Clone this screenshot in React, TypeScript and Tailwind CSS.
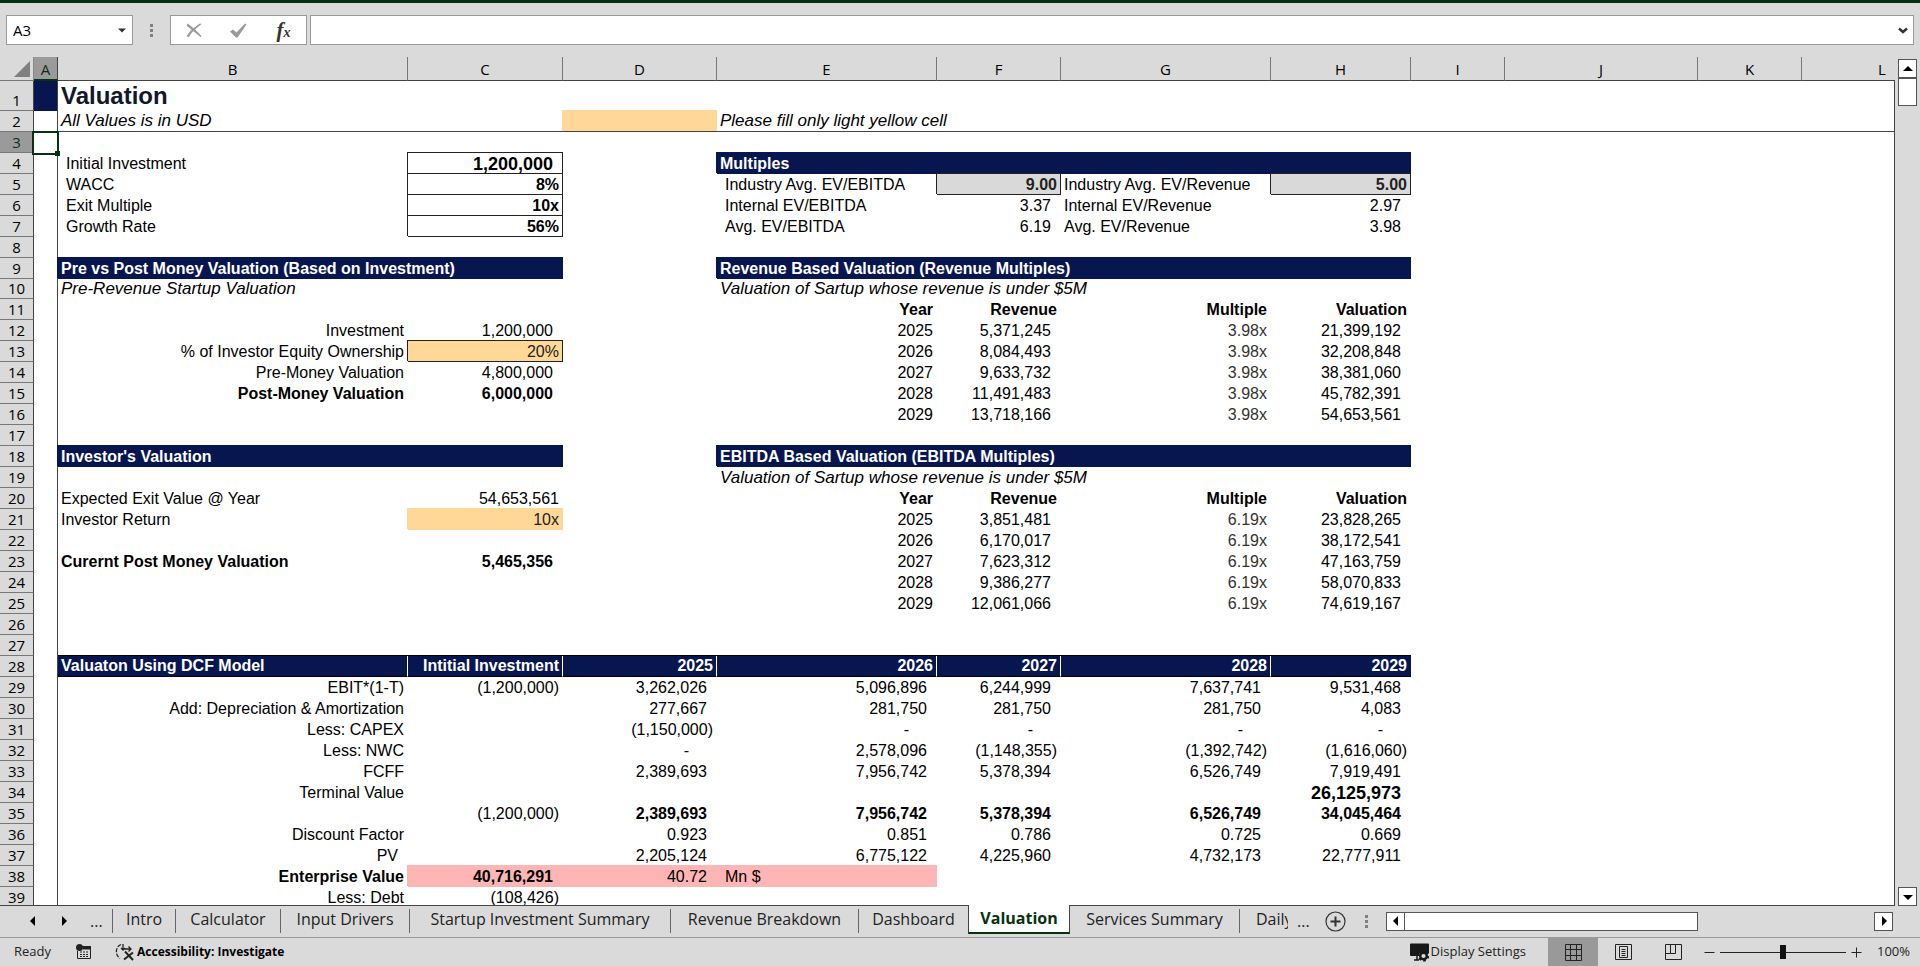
import { useState } from 'react';
import type { ReactNode } from 'react';

type Cell = { v?: ReactNode; cls?: string; span?: number };

const COLUMNS = [
  { id: 'A', w: 'w-[24px]' },
  { id: 'B', w: 'w-[350px]' },
  { id: 'C', w: 'w-[155px]' },
  { id: 'D', w: 'w-[154px]' },
  { id: 'E', w: 'w-[220px]' },
  { id: 'F', w: 'w-[124px]' },
  { id: 'G', w: 'w-[210px]' },
  { id: 'H', w: 'w-[140px]' },
  { id: 'I', w: 'w-[94px]' },
  { id: 'J', w: 'w-[193px]' },
  { id: 'K', w: 'w-[104px]' },
  { id: 'L', w: 'w-[161px]' },
];

// alignment presets
const L = 'pl-[3px]';
const LI = 'pl-2';
const R = 'text-right pr-1';
const ACC = 'text-right pr-[10px]';
const DASH = 'text-right pr-7';
const NOTE = 'pl-[3px] text-[17px] italic';

// fills and boxes
const BOX = 'shadow-[-1px_-1px_0_0_#222,0_-1px_0_0_#222,inset_-1px_-1px_0_0_#222]';
const NAVY = 'bg-[#08164f] text-white font-bold shadow-[-1px_-1px_0_0_#08164f,0_-1px_0_0_#08164f]';
const YELLOW = 'bg-[#ffd898]';
const YELLOW_EDGE = 'shadow-[-1px_-1px_0_0_#ffd898,0_-1px_0_0_#ffd898]';
const PINK = 'bg-[#feb5b5] shadow-[-1px_-1px_0_0_#feb5b5,0_-1px_0_0_#feb5b5]';
const DCF = 'bg-[#08164f] text-white font-bold border-b border-b-black shadow-[0_-1px_0_0_#000]';
const DCF_R = DCF + ' border-r border-r-white text-right pr-[3px]';

const cells: Record<string, Cell> = {
  A1: { cls: 'bg-[#08164f]' },
  B1: { v: 'Valuation', cls: 'pl-[3px] pb-[1px] text-2xl leading-7 font-bold text-[#111827]' },
  B2: { v: 'All Values is in USD', cls: NOTE },
  D2: { cls: YELLOW + ' ' + YELLOW_EDGE },
  E2: { v: 'Please fill only light yellow cell', cls: NOTE },

  B4: { v: 'Initial Investment', cls: LI },
  B5: { v: 'WACC', cls: LI },
  B6: { v: 'Exit Multiple', cls: LI },
  B7: { v: 'Growth Rate', cls: LI },
  C4: { v: '1,200,000', cls: ACC + ' font-bold text-lg leading-5 ' + BOX },
  C5: { v: '8%', cls: R + ' font-bold ' + BOX },
  C6: { v: '10x', cls: R + ' font-bold ' + BOX },
  C7: { v: '56%', cls: R + ' font-bold ' + BOX },

  E4: { v: 'Multiples', cls: L + ' ' + NAVY, span: 4 },
  E5: { v: 'Industry Avg. EV/EBITDA', cls: LI },
  F5: { v: '9.00', cls: R + ' font-bold bg-[#d9d9d9] text-[#222] ' + BOX },
  G5: { v: 'Industry Avg. EV/Revenue', cls: L },
  H5: { v: '5.00', cls: R + ' font-bold bg-[#d9d9d9] text-[#222] ' + BOX },
  E6: { v: 'Internal EV/EBITDA', cls: LI },
  F6: { v: '3.37', cls: ACC },
  G6: { v: 'Internal EV/Revenue', cls: L },
  H6: { v: '2.97', cls: ACC },
  E7: { v: 'Avg. EV/EBITDA', cls: LI },
  F7: { v: '6.19', cls: ACC },
  G7: { v: 'Avg. EV/Revenue', cls: L },
  H7: { v: '3.98', cls: ACC },

  B9: { v: 'Pre vs Post Money Valuation (Based on Investment)', cls: L + ' ' + NAVY, span: 2 },
  B10: { v: 'Pre-Revenue Startup Valuation', cls: NOTE },
  B12: { v: 'Investment', cls: R },
  C12: { v: '1,200,000', cls: ACC },
  B13: { v: '% of Investor Equity Ownership', cls: R },
  C13: { v: '20%', cls: R + ' text-[#222] ' + YELLOW + ' ' + BOX },
  B14: { v: 'Pre-Money Valuation', cls: R },
  C14: { v: '4,800,000', cls: ACC },
  B15: { v: 'Post-Money Valuation', cls: R + ' font-bold' },
  C15: { v: '6,000,000', cls: ACC + ' font-bold' },

  B18: { v: "Investor's Valuation", cls: L + ' ' + NAVY, span: 2 },
  B20: { v: 'Expected Exit Value @ Year', cls: L },
  C20: { v: '54,653,561', cls: R },
  B21: { v: 'Investor Return', cls: L },
  C21: { v: '10x', cls: R + ' text-[#222] ' + YELLOW + ' ' + YELLOW_EDGE },
  B23: { v: 'Curernt Post Money Valuation', cls: L + ' font-bold' },
  C23: { v: '5,465,356', cls: ACC + ' font-bold' },

  B28: { v: 'Valuaton Using DCF Model', cls: DCF + ' pl-[3px] border-r border-r-white' },
  C28: { v: 'Intitial Investment', cls: DCF_R },
  D28: { v: '2025', cls: DCF_R },
  E28: { v: '2026', cls: DCF_R },
  F28: { v: '2027', cls: DCF_R },
  G28: { v: '2028', cls: DCF_R },
  H28: { v: '2029', cls: DCF + ' text-right pr-1' },

  B38: { v: 'Enterprise Value', cls: R + ' font-bold' },
  C38: { v: '40,716,291', cls: ACC + ' font-bold ' + PINK },
  D38: { v: '40.72', cls: ACC + ' ' + PINK },
  E38: { v: 'Mn $', cls: LI + ' ' + PINK },
  B39: { v: 'Less: Debt', cls: R },
  C39: { v: '(108,426)', cls: R },
};

function addMultiples(top: number, title: string, rows: string[][]) {
  cells['E' + top] = { v: title, cls: L + ' ' + NAVY, span: 4 };
  cells['E' + (top + 1)] = { v: 'Valuation of Sartup whose revenue is under $5M', cls: NOTE };
  ['Year', 'Revenue', 'Multiple', 'Valuation'].forEach((h, i) => {
    cells['EFGH'[i] + (top + 2)] = { v: h, cls: R + ' font-bold' };
  });
  rows.forEach(([year, revenue, multiple, valuation], i) => {
    const n = top + 3 + i;
    cells['E' + n] = { v: year, cls: R };
    cells['F' + n] = { v: revenue, cls: ACC };
    cells['G' + n] = { v: multiple, cls: R + ' text-[#333]' };
    cells['H' + n] = { v: valuation, cls: ACC };
  });
}

addMultiples(9, 'Revenue Based Valuation (Revenue Multiples)', [
  ['2025', '5,371,245', '3.98x', '21,399,192'],
  ['2026', '8,084,493', '3.98x', '32,208,848'],
  ['2027', '9,633,732', '3.98x', '38,381,060'],
  ['2028', '11,491,483', '3.98x', '45,782,391'],
  ['2029', '13,718,166', '3.98x', '54,653,561'],
]);

addMultiples(18, 'EBITDA Based Valuation (EBITDA Multiples)', [
  ['2025', '3,851,481', '6.19x', '23,828,265'],
  ['2026', '6,170,017', '6.19x', '38,172,541'],
  ['2027', '7,623,312', '6.19x', '47,163,759'],
  ['2028', '9,386,277', '6.19x', '58,070,833'],
  ['2029', '12,061,066', '6.19x', '74,619,167'],
]);

const dcfRows: [number, string[]][] = [
  [29, ['EBIT*(1-T)', '(1,200,000)', '3,262,026', '5,096,896', '6,244,999', '7,637,741', '9,531,468']],
  [30, ['Add: Depreciation & Amortization', '', '277,667', '281,750', '281,750', '281,750', '4,083']],
  [31, ['Less: CAPEX', '', '(1,150,000)', '-', '-', '-', '-']],
  [32, ['Less: NWC', '', '-', '2,578,096', '(1,148,355)', '(1,392,742)', '(1,616,060)']],
  [33, ['FCFF', '', '2,389,693', '7,956,742', '5,378,394', '6,526,749', '7,919,491']],
  [34, ['Terminal Value', '', '', '', '', '', '26,125,973']],
  [35, ['', '(1,200,000)', '2,389,693', '7,956,742', '5,378,394', '6,526,749', '34,045,464']],
  [36, ['Discount Factor', '', '0.923', '0.851', '0.786', '0.725', '0.669']],
  [37, ['PV', '', '2,205,124', '6,775,122', '4,225,960', '4,732,173', '22,777,911']],
];

dcfRows.forEach(([n, values]) => {
  values.forEach((v, i) => {
    if (!v) return;
    let cls = ACC;
    if (v === '-') cls = DASH;
    else if (v.startsWith('(') || (i === 0 && v !== 'PV')) cls = R;
    if (n === 35 && i > 1) cls += ' font-bold';
    if (n === 34 && i > 1) cls += ' font-bold text-lg leading-5';
    cells['BCDEFGH'[i] + n] = { v, cls };
  });
});

const ROWS = Array.from({ length: 39 }, (_, i) => i + 1);

function rowHeight(n: number) {
  if (n === 1) return 'h-[30px]';
  if (n === 10) return 'h-[20px]';
  return 'h-[21px]';
}

function SheetRow({ n }: { n: number }) {
  const tds: ReactNode[] = [];
  for (let i = 0; i < COLUMNS.length; i++) {
    const id = COLUMNS[i].id;
    const cell = cells[id + n];
    const freeze =
      (n === 2 ? ' border-b border-b-[#444]' : '') +
      (id === 'A' ? ' border-r border-r-[#444]' : '');
    tds.push(
      <td
        key={id}
        colSpan={cell?.span}
        className={'p-0 align-bottom whitespace-nowrap ' + (cell?.cls ?? '') + freeze}
      >
        {n === 3 && id === 'A' ? (
          <div className="relative h-5">
            <div className="absolute -top-[2px] -left-[2px] h-6 w-[27px] border-2 border-[#06320f]" />
            <div className="absolute top-[18px] left-[21px] size-[5px] bg-[#06320f]" />
          </div>
        ) : (
          cell?.v
        )}
      </td>,
    );
    if (cell?.span) i += cell.span - 1;
  }
  return (
    <tr className={rowHeight(n)}>
      <th
        scope="row"
        className={
          'border-r border-b border-r-[#444] border-b-[#777] p-0 text-center align-bottom font-["Open_Sans",sans-serif] text-[15px] leading-[19px] font-normal ' +
          (n === 3 ? 'bg-[#9a9a9a] text-[#0b3016]' : 'bg-[#dadada]')
        }
      >
        {n}
      </th>
      {tds}
    </tr>
  );
}

function Sheet() {
  return (
    <table className='w-[1963px] table-fixed border-separate border-spacing-0 bg-white font-["Liberation_Sans",Arial,sans-serif] text-base leading-5 text-black'>
      <colgroup>
        <col className="w-[34px]" />
        {COLUMNS.map(c => (
          <col key={c.id} className={c.w} />
        ))}
      </colgroup>
      <thead>
        <tr className='h-6 bg-[#dadada] font-["Open_Sans",sans-serif] text-[15px]'>
          <td className="border-r border-b border-r-[#888] border-b-[#777] p-0 align-bottom">
            <svg className="mb-[3px] ml-[14px]" width="16" height="16" viewBox="0 0 16 16" aria-hidden="true">
              <path d="M16 0V16H0Z" fill="#808080" />
            </svg>
          </td>
          {COLUMNS.map(c => (
            <th
              key={c.id}
              scope="col"
              className={
                'border-r p-0 text-center align-bottom font-normal ' +
                (c.id === 'A'
                  ? 'border-r-[#444] border-b-2 border-b-[#06320f] bg-[#9a9a9a] text-[#0b3016]'
                  : 'border-r-[#777] border-b border-b-[#444] pb-[1px]')
              }
            >
              {c.id}
            </th>
          ))}
        </tr>
      </thead>
      <tbody>
        {ROWS.map(n => (
          <SheetRow key={n} n={n} />
        ))}
      </tbody>
    </table>
  );
}

function Dots() {
  return (
    <span className="flex flex-col gap-[2px]">
      <span className="size-[3px] bg-[#808080]" />
      <span className="size-[3px] bg-[#808080]" />
      <span className="size-[3px] bg-[#808080]" />
    </span>
  );
}

function FormulaBar() {
  return (
    <div className="flex h-[54px] shrink-0 items-start pt-3 pr-[6px] pl-[6px]">
      <div className="flex h-[30px] w-[127px] items-center border border-[#999] bg-white">
        <input
          aria-label="Name Box"
          defaultValue="A3"
          className='min-w-0 flex-1 bg-transparent pl-[6px] font-["Open_Sans",sans-serif] text-[15px] outline-none'
        />
        <button type="button" aria-label="Open name list" className="px-[6px]">
          <svg width="8" height="5" viewBox="0 0 8 5" aria-hidden="true">
            <path d="M0 0.500H8L4 4.500Z" fill="#333" />
          </svg>
        </button>
      </div>
      <div className="flex h-[30px] w-[37px] items-center justify-center">
        <Dots />
      </div>
      <div className="flex h-[30px] w-[137px] items-center border border-[#999] bg-white">
        <button type="button" aria-label="Cancel" className="flex flex-1 justify-center">
          <svg width="16" height="15" viewBox="0 0 16 15" fill="#999" aria-hidden="true">
            <path d="M1.500 0.500C5 3 11 8 15.500 13L14.500 14C10 10 4 5.500 0.500 2.500Z" />
            <path d="M14 0.500L15.500 1C11 4.500 5 9.500 3 14L0.500 13.500C3 8.500 9 4 14 0.500Z" />
          </svg>
        </button>
        <button type="button" aria-label="Enter" className="flex flex-1 justify-center">
          <svg width="17" height="15" viewBox="0 0 17 15" fill="none" aria-hidden="true">
            <path d="M0 8.500L3 6.500L6.500 9.500L15 0.500L16.500 1.500L7.500 14.500H6Z" fill="#999" />
          </svg>
        </button>
        <button
          type="button"
          aria-label="Insert Function"
          className='flex-1 font-["Liberation_Serif",serif] text-[21px] leading-6 font-bold text-[#333] italic'
        >
          f<span className="text-sm">x</span>
        </button>
      </div>
      <div className="ml-[3px] flex h-[30px] flex-1 items-center border border-[#999] bg-white">
        <input aria-label="Formula Bar" className="h-full min-w-0 flex-1 px-2 text-sm outline-none" />
        <button type="button" aria-label="Expand Formula Bar" className="px-[5px]">
          <svg width="10" height="7" viewBox="0 0 10 7" aria-hidden="true">
            <path d="M1 1.500L5 5L9 1.500" fill="none" stroke="#333" strokeWidth="2.500" />
          </svg>
        </button>
      </div>
    </div>
  );
}

function Arrow({ d }: { d: string }) {
  return (
    <svg width="10" height="10" viewBox="0 0 10 10" aria-hidden="true">
      <path d={d} fill="#000" />
    </svg>
  );
}

const SCROLL_BUTTON = 'flex size-[19px] shrink-0 items-center justify-center border border-[#555] bg-white';

const TABS = [
  { name: 'Intro', w: 'w-[63px]' },
  { name: 'Calculator', w: 'w-[105px]' },
  { name: 'Input Drivers', w: 'w-[129px]' },
  { name: 'Startup Investment Summary', w: 'w-[261px]' },
  { name: 'Revenue Breakdown', w: 'w-[188px]' },
  { name: 'Dashboard', w: 'w-[109px]' },
  { name: 'Valuation', w: 'w-[102px]' },
  { name: 'Services Summary', w: 'w-[170px]' },
];

function SheetTabs() {
  const [active, setActive] = useState('Valuation');
  return (
    <div className='flex h-8 shrink-0 items-start border-b border-[#999] font-["Open_Sans",sans-serif] text-base text-[#222]'>
      <div className="flex h-[30px] w-28 shrink-0 items-center">
        <button type="button" aria-label="Previous sheet" className="ml-7">
          <Arrow d="M7 0V10L2 5Z" />
        </button>
        <button type="button" aria-label="Next sheet" className="ml-[22px]">
          <Arrow d="M2 0V10L7 5Z" />
        </button>
        <button type="button" aria-label="More sheets" className="ml-5 leading-6">...</button>
      </div>
      <div className="mt-[3px] h-6 w-px shrink-0 bg-[#666]" />
      {TABS.map(({ name, w }, i) =>
        name === active ? (
          <button
            key={name}
            type="button"
            className={
              'relative z-10 -mt-px h-[29px] shrink-0 border-x border-b-2 border-x-[#444] border-b-[#06320f] bg-white pb-[1px] font-bold whitespace-nowrap text-[#06320f] ' + w
            }
          >
            {name}
          </button>
        ) : (
          <button
            key={name}
            type="button"
            onClick={() => setActive(name)}
            className={
              'mt-[3px] h-6 shrink-0 pb-1 leading-5 whitespace-nowrap ' +
              w +
              (TABS[i + 1]?.name === active ? '' : ' border-r border-r-[#666]')
            }
          >
            {name}
          </button>
        ),
      )}
      <button type="button" className="mt-[3px] h-6 w-[48px] shrink-0 overflow-hidden pb-1 pl-4 text-left leading-5">
        Daily
      </button>
      <div className="flex h-[30px] flex-1 items-center">
        <button type="button" aria-label="Scroll tabs right" className="ml-[9px] leading-6">...</button>
        <button type="button" aria-label="New sheet" className="ml-[15px]">
          <svg width="21" height="21" viewBox="0 0 21 21" fill="none" stroke="#333" aria-hidden="true">
            <circle cx="10.500" cy="10.500" r="9.500" strokeWidth="1.200" />
            <path d="M10.500 5.500V15.500M5.500 10.500H15.500" strokeWidth="2" />
          </svg>
        </button>
        <div className="ml-[19px]">
          <Dots />
        </div>
        <div className="ml-auto flex w-[507px] items-center">
          <button type="button" aria-label="Scroll left" className={SCROLL_BUTTON}>
            <Arrow d="M7 0V10L2 5Z" />
          </button>
          <div className="-ml-px h-[19px] w-[294px] border border-[#555] bg-white" />
          <button type="button" aria-label="Scroll right" className={'ml-auto ' + SCROLL_BUTTON}>
            <Arrow d="M3 0V10L8 5Z" />
          </button>
        </div>
        <div className="w-[27px]" />
      </div>
    </div>
  );
}

const VIEW_BUTTON = 'flex h-full w-[50px] items-center justify-center';

function StatusBar() {
  return (
    <div className='flex h-7 shrink-0 items-center pl-[14px] font-["Open_Sans",sans-serif] text-[13px] text-[#222]'>
      <span>Ready</span>
      <button type="button" aria-label="Record macro" className="ml-[25px]">
        <svg width="16" height="16" viewBox="0 0 16 16" aria-hidden="true">
          <path d="M5.500 2.500H14.500V14.500H1.500V7" fill="none" stroke="#222" />
          <path d="M7 2H15V5.500H7Z" fill="#222" />
          <circle cx="3.500" cy="3.500" r="3.500" fill="#222" />
          <path d="M4 8H12.500M4 10.500H12.500M4 12.500H12.500" stroke="#222" strokeDasharray="2 1" />
        </svg>
      </button>
      <button type="button" className="ml-[23px] flex items-center gap-[3px] text-xs font-bold text-black">
        <svg width="19" height="18" viewBox="0 0 19 18" fill="none" stroke="#222" aria-hidden="true">
          <path d="M6 1.500C0 4 0 12 5 15.500" strokeWidth="1.300" strokeDasharray="4 1.500" />
          <path d="M8 1V7M6 5L8 7L10 5M9 6H16M13.500 3.500L16 6L13.500 8.500" strokeWidth="1.300" />
          <path d="M10 8.500L18 17M18 9.500L9 16.500" strokeWidth="2" />
        </svg>
        Accessibility: Investigate
      </button>
      <div className="ml-auto flex h-full items-center">
        <button type="button" className="mr-[22px] flex items-center gap-[2px]">
          <svg width="19" height="19" viewBox="0 0 19 19" aria-hidden="true">
            <path d="M1 0.500H18Q19 0.500 19 1.500V10H9V13H1Q0 13 0 12V1.500Q0 0.500 1 0.500Z" fill="#181818" />
            <path d="M4 17H9M7 13V17" stroke="#181818" strokeWidth="1.500" />
            <circle cx="13.500" cy="13" r="4.800" fill="none" stroke="#181818" strokeWidth="1.800" strokeDasharray="2.500 2.500" />
            <circle cx="13.500" cy="13" r="3.300" fill="#dadada" stroke="#181818" strokeWidth="2.400" />
          </svg>
          Display Settings
        </button>
        <button type="button" aria-label="Normal view" className={VIEW_BUTTON + ' bg-[#999]'}>
          <svg width="17" height="17" viewBox="0 0 17 17" fill="none" stroke="#222" aria-hidden="true">
            <path d="M0.500 0.500H16.500V16.500H0.500ZM5.500 0.500V16.500M11.500 0.500V16.500M0.500 5.500H16.500M0.500 11.500H16.500" />
          </svg>
        </button>
        <button type="button" aria-label="Page layout" className={VIEW_BUTTON}>
          <svg width="17" height="16" viewBox="0 0 17 16" fill="none" stroke="#222" aria-hidden="true">
            <path d="M0.500 0.500H16.500V15.500H0.500ZM4.500 2.500H12.500V13.500H4.500ZM6.500 5.500H10.500M6.500 7.500H10.500M6.500 9.500H10.500M6.500 11.500H10.500" />
          </svg>
        </button>
        <button type="button" aria-label="Page break preview" className={VIEW_BUTTON}>
          <svg width="17" height="16" viewBox="0 0 17 16" fill="none" stroke="#222" aria-hidden="true">
            <path d="M0.500 0.500H16.500V15.500H0.500ZM5.500 0.500V9.500M0.500 9.500H10.500V0.500" />
          </svg>
        </button>
        <button type="button" aria-label="Zoom out" className="ml-[6px]">
          <svg width="11" height="11" viewBox="0 0 11 11" stroke="#222" aria-hidden="true">
            <path d="M0.500 5.500H10.500" />
          </svg>
        </button>
        <input
          type="range"
          min={10}
          max={190}
          defaultValue={100}
          aria-label="Zoom"
          className="mx-[5px] h-4 w-[126px] appearance-none bg-[linear-gradient(#222,#222)] bg-[length:100%_1px] bg-center bg-no-repeat [&::-webkit-slider-thumb]:h-[14px] [&::-webkit-slider-thumb]:w-[6px] [&::-webkit-slider-thumb]:appearance-none [&::-webkit-slider-thumb]:bg-[#111]"
        />
        <button type="button" aria-label="Zoom in">
          <svg width="11" height="11" viewBox="0 0 11 11" stroke="#222" aria-hidden="true">
            <path d="M0.500 5.500H10.500M5.500 0.500V10.500" />
          </svg>
        </button>
        <button type="button" className="w-[58px] pr-[10px] text-right">100%</button>
      </div>
    </div>
  );
}

export default function App() {
  return (
    <div className="flex h-screen flex-col overflow-hidden bg-[#dadada] text-black">
      <div className="h-[3px] shrink-0 bg-[#04310f]" />
      <FormulaBar />
      <main className="flex min-h-0 flex-1">
        <div className="flex min-w-0 flex-1 border-b border-[#444]">
          <div className="min-w-0 flex-1 overflow-hidden">
            <Sheet />
          </div>
          <div className="mt-[23px] w-px bg-[#444]" />
        </div>
        <div className="flex w-[25px] flex-col pt-[2px] pl-[3px]">
          <button type="button" aria-label="Scroll up" className={SCROLL_BUTTON}>
            <Arrow d="M0 7H10L5 2Z" />
          </button>
          <div className="h-7 w-[19px] border border-[#555] bg-white" />
          <button type="button" aria-label="Scroll down" className={'mt-auto ' + SCROLL_BUTTON}>
            <Arrow d="M0 3H10L5 8Z" />
          </button>
        </div>
      </main>
      <SheetTabs />
      <StatusBar />
    </div>
  );
}
